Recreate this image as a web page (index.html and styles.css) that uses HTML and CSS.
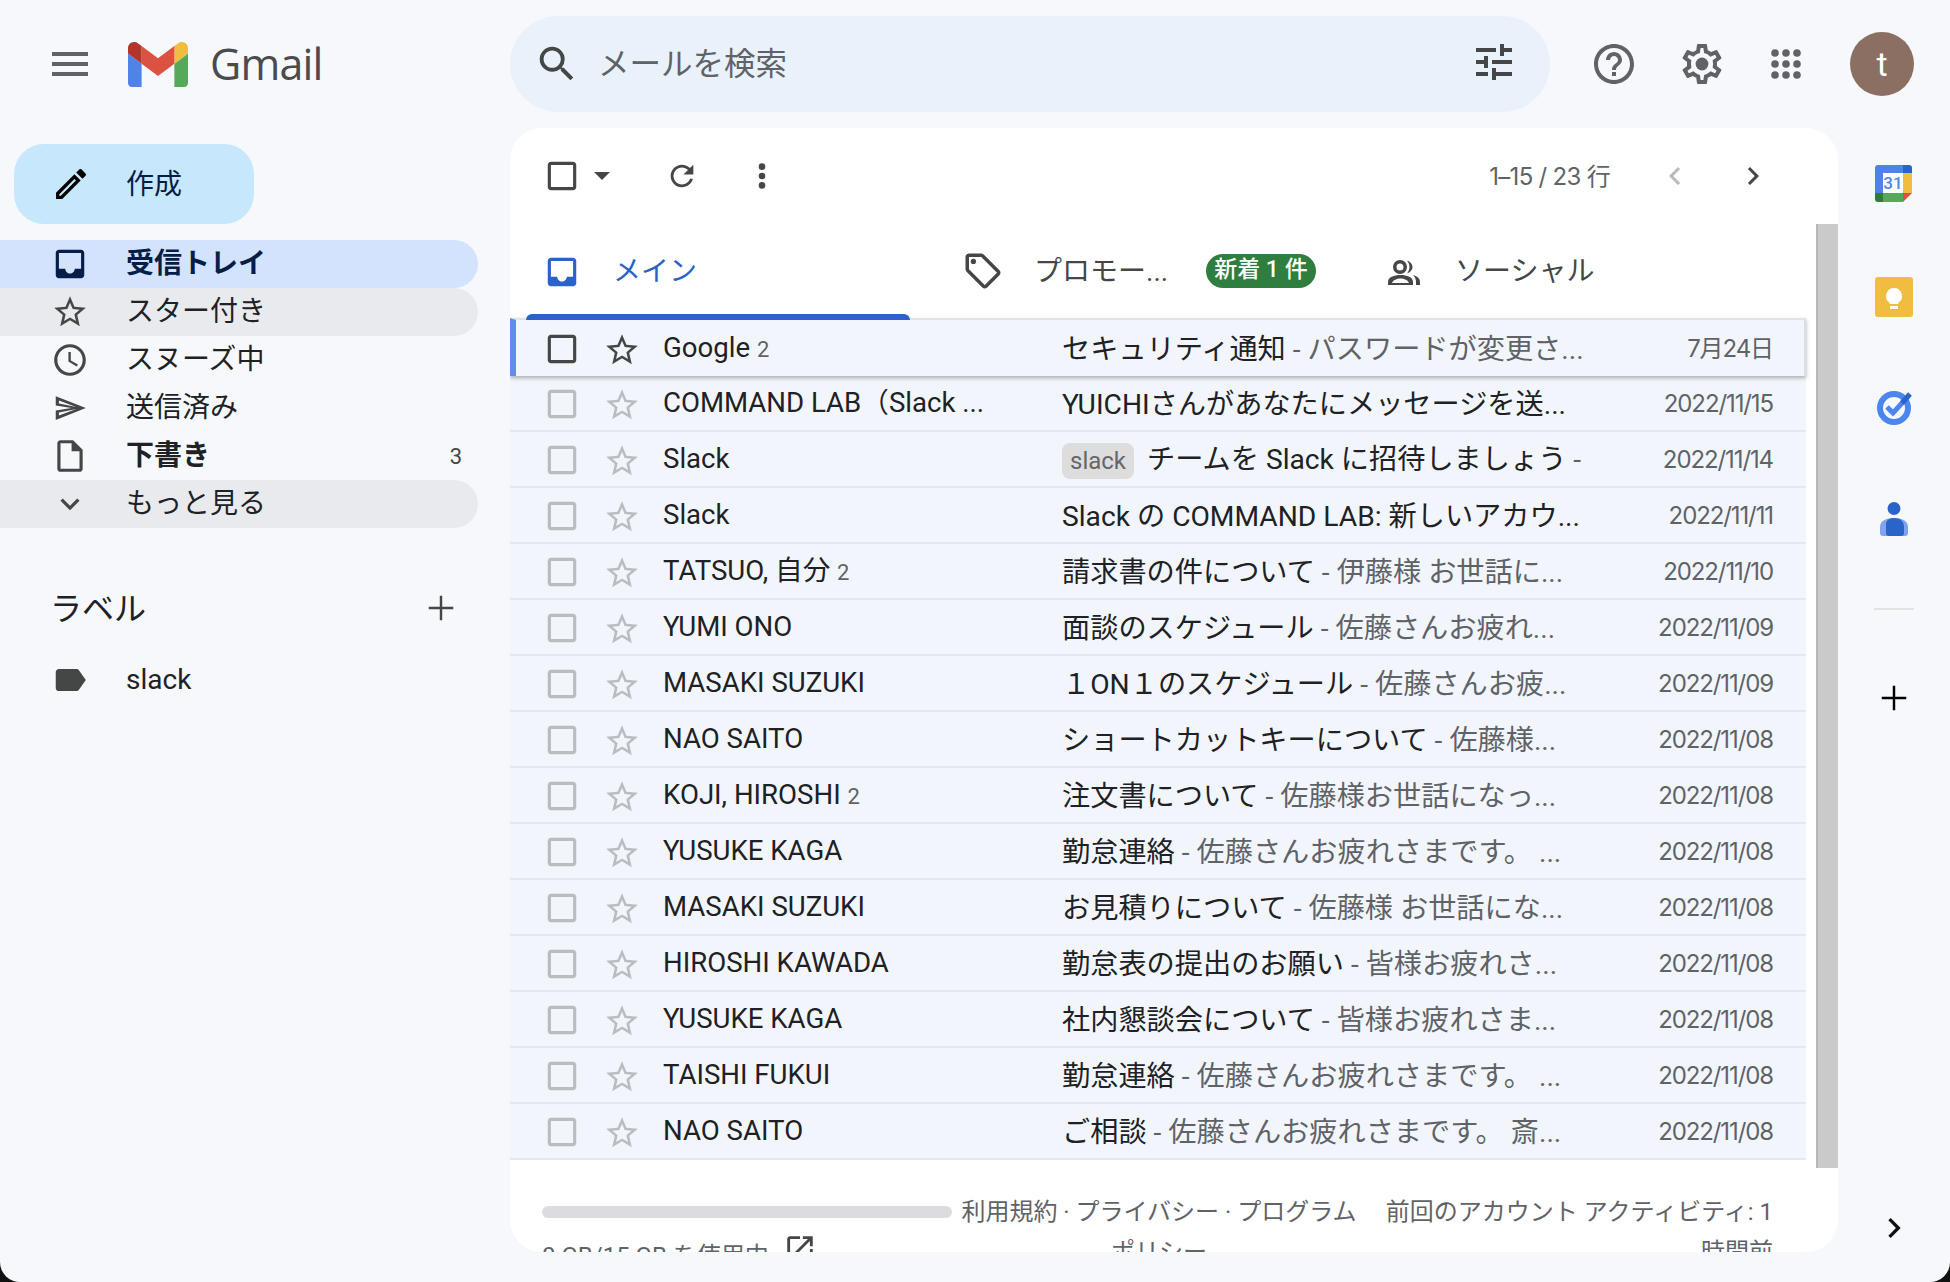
FILE: index.html
```html
<!DOCTYPE html>
<html lang="ja">
  <head>
    <meta charset="UTF-8" />
    <title>Gmail</title>
    <link rel="stylesheet" href="styles.css">
  </head>
  <body>
    <svg class="defs" aria-hidden="true">
      <symbol id="i-check" viewBox="0 0 24 24"><path d="M19 5v14H5V5h14m0-2H5c-1.1 0-2 .9-2 2v14c0 1.1.9 2 2 2h14c1.1 0 2-.9 2-2V5c0-1.1-.9-2-2-2z"/></symbol>
      <symbol id="i-star" viewBox="0 0 24 24"><path d="M22 9.24l-7.19-.62L12 2 9.19 8.63 2 9.24l5.46 4.73L5.82 21 12 17.27 18.18 21l-1.63-7.03L22 9.24zM12 15.4l-3.76 2.27 1-4.28-3.32-2.88 4.38-.38L12 6.1l1.71 4.04 4.38.38-3.32 2.88 1 4.28L12 15.4z"/></symbol>
      <symbol id="i-inbox" viewBox="0 0 24 24"><path d="M19 3H5c-1.1 0-2 .9-2 2v14c0 1.1.9 2 2 2h14c1.1 0 2-.9 2-2V5c0-1.1-.9-2-2-2zm0 12h-4c0 1.66-1.35 3-3 3s-3-1.34-3-3H5V5h14v10z"/></symbol>
      <symbol id="i-add" viewBox="0 0 24 24"><path d="M19 12.7h-6.300V19h-1.400v-6.300H5v-1.400h6.300V5h1.400v6.300H19z"/></symbol>
    </svg>

    <div class="screen">
      <header class="topbar">
        <div class="brand">
          <svg class="ico menu-ico" viewBox="0 0 24 24"><path d="M3 18h18v-2H3v2zm0-5h18v-2H3v2zm0-7v2h18V6H3z"/></svg>
          <svg class="gmail-logo" viewBox="52 42 88 66">
            <path fill="#5083ea" d="M58 108h14V74L52 59v43c0 3.32 2.69 6 6 6"/>
            <path fill="#57a85a" d="M120 108h14c3.32 0 6-2.69 6-6V59l-20 15"/>
            <path fill="#f1bd41" d="M120 48v26l20-15v-8c0-7.42-8.47-11.65-14.4-7.2"/>
            <path fill="#dc5240" d="M72 74V48l24 18 24-18v26L96 92"/>
            <path fill="#b2352b" d="M52 51v8l20 15V48l-5.6-4.2c-5.94-4.45-14.4-.22-14.4 7.2"/>
          </svg>
          <span class="brand-name">Gmail</span>
        </div>
        <div class="search">
          <svg class="ico search-ico" viewBox="0 0 24 24"><path d="M15.5 14h-.79l-.28-.27A6.471 6.471 0 0 0 16 9.5 6.5 6.5 0 1 0 9.5 16c1.61 0 3.09-.59 4.23-1.57l.27.28v.79l5 4.99L20.49 19l-4.99-5zm-6 0C7.01 14 5 11.99 5 9.5S7.01 5 9.5 5 14 7.01 14 9.5 11.99 14 9.5 14z"/></svg>
          <span class="search-text">メールを検索</span>
          <svg class="ico tune-ico" viewBox="0 0 24 24"><path d="M3 17v2h6v-2H3zM3 5v2h10V5H3zm10 16v-2h8v-2h-8v-2h-2v6h2zM7 9v2H3v2h4v2h2V9H7zm14 4v-2H11v2h10zm-6-4h2V7h4V5h-4V3h-2v6z"/></svg>
        </div>
        <div class="top-actions">
          <svg class="ico help-ico" viewBox="0 0 24 24"><path d="M11 18h2v-2h-2v2zm1-16C6.48 2 2 6.48 2 12s4.48 10 10 10 10-4.48 10-10S17.52 2 12 2zm0 18c-4.41 0-8-3.59-8-8s3.59-8 8-8 8 3.59 8 8-3.59 8-8 8zm0-14c-2.21 0-4 1.79-4 4h2c0-1.1.9-2 2-2s2 .9 2 2c0 2-3 1.75-3 5h2c0-2.25 3-2.5 3-5 0-2.21-1.79-4-4-4z"/></svg>
          <svg class="ico gear-ico" viewBox="0 0 24 24"><path d="M19.43 12.98c.04-.32.07-.64.07-.98 0-.34-.03-.66-.07-.98l2.11-1.65c.19-.15.24-.42.12-.64l-2-3.46c-.09-.16-.26-.25-.44-.25-.06 0-.12.01-.17.03l-2.49 1c-.52-.4-1.08-.73-1.69-.98l-.38-2.65C14.46 2.18 14.25 2 14 2h-4c-.25 0-.46.18-.49.42l-.38 2.65c-.61.25-1.17.59-1.69.98l-2.49-1c-.06-.02-.12-.03-.18-.03-.17 0-.34.09-.43.25l-2 3.46c-.13.22-.07.49.12.64l2.11 1.65c-.04.32-.07.65-.07.98 0 .33.03.66.07.98l-2.11 1.65c-.19.15-.24.42-.12.64l2 3.46c.09.16.26.25.44.25.06 0 .12-.01.17-.03l2.49-1c.52.4 1.08.73 1.69.98l.38 2.65c.03.24.24.42.49.42h4c.25 0 .46-.18.49-.42l.38-2.65c.61-.25 1.17-.59 1.69-.98l2.49 1c.06.02.12.03.18.03.17 0 .34-.09.43-.25l2-3.46c.12-.22.07-.49-.12-.64l-2.11-1.65zm-1.98-1.71c.04.31.05.52.05.73 0 .21-.02.43-.05.73l-.14 1.13.89.7 1.08.84-.7 1.21-1.27-.51-1.04-.42-.9.68c-.43.32-.84.56-1.25.73l-1.06.43-.16 1.13-.2 1.35h-1.4l-.19-1.35-.16-1.13-1.06-.43c-.43-.18-.83-.41-1.23-.71l-.91-.7-1.06.43-1.27.51-.7-1.21 1.08-.84.89-.7-.14-1.13c-.03-.31-.05-.54-.05-.74s.02-.43.05-.73l.14-1.13-.89-.7-1.08-.84.7-1.21 1.27.51 1.04.42.9-.68c.43-.32.84-.56 1.25-.73l1.06-.43.16-1.13.2-1.35h1.39l.19 1.35.16 1.13 1.06.43c.43.18.83.41 1.23.71l.91.7 1.06-.43 1.27-.51.7 1.21-1.07.85-.89.7.14 1.13z"/><circle cx="12" cy="12" r="3.2"/></svg>
          <svg class="ico apps-ico" viewBox="0 0 32 32"><circle cx="5" cy="5" r="3.8"/><circle cx="16" cy="5" r="3.8"/><circle cx="27" cy="5" r="3.8"/><circle cx="5" cy="16" r="3.8"/><circle cx="16" cy="16" r="3.8"/><circle cx="27" cy="16" r="3.8"/><circle cx="5" cy="27" r="3.8"/><circle cx="16" cy="27" r="3.8"/><circle cx="27" cy="27" r="3.8"/></svg>
          <div class="avatar">t</div>
        </div>
      </header>

      <div class="body-row">
        <aside class="sidebar">
          <div class="compose">
            <svg class="compose-ico" viewBox="0 0 24 24"><path d="M3 17.25V21h3.75L17.81 9.94l-3.75-3.75L3 17.25zM5.92 19H5v-.92l9.06-9.06.92.92L5.92 19zM20.71 5.63l-2.34-2.34c-.2-.2-.45-.29-.71-.29s-.51.1-.7.29l-1.83 1.83 3.75 3.75 1.83-1.83c.39-.39.39-1.02 0-1.41z"/></svg>
            <span class="compose-label">作成</span>
          </div>
          <nav class="nav">
            <div class="nav-item active">
              <svg class="nav-ico"><use href="#i-inbox"/></svg><span class="nav-label">受信トレイ</span>
            </div>
            <div class="nav-item hover">
              <svg class="nav-ico"><use href="#i-star"/></svg><span class="nav-label">スター付き</span>
            </div>
            <div class="nav-item">
              <svg class="nav-ico" viewBox="0 0 24 24"><path d="M11.99 2C6.47 2 2 6.48 2 12s4.47 10 9.99 10C17.52 22 22 17.52 22 12S17.52 2 11.99 2zM12 20c-4.42 0-8-3.58-8-8s3.58-8 8-8 8 3.58 8 8-3.58 8-8 8zm.5-13H11v6l5.25 3.15.75-1.23-4.5-2.67z"/></svg><span class="nav-label">スヌーズ中</span>
            </div>
            <div class="nav-item">
              <svg class="nav-ico" viewBox="0 0 24 24"><path fill-rule="evenodd" d="M3 4.500 22 12 3 19.500V13.600L13 12 3 10.400zM5 7.200v2l11 2.200zM5 16.800v-2l11-2.200z"/></svg><span class="nav-label">送信済み</span>
            </div>
            <div class="nav-item strong">
              <svg class="nav-ico" viewBox="0 0 24 24"><path d="M14 2H6c-1.1 0-1.99.9-1.99 2L4 20c0 1.1.89 2 1.99 2H18c1.1 0 2-.9 2-2V8l-6-6zM6 20V4h7v5h5v11H6z"/></svg><span class="nav-label">下書き</span><span class="nav-count">3</span>
            </div>
            <div class="nav-item hover">
              <svg class="nav-ico" viewBox="0 0 24 24"><path d="M16.59 8.59L12 13.17 7.41 8.59 6 10l6 6 6-6z"/></svg><span class="nav-label">もっと見る</span>
            </div>
          </nav>
          <div class="label-head">
            <span class="label-title">ラベル</span>
            <svg class="label-add"><use href="#i-add"/></svg>
          </div>
          <div class="nav-item label-item">
            <svg class="nav-ico" viewBox="0 0 24 24"><path d="M17.63 5.84C17.27 5.33 16.67 5 16 5L5 5.01C3.9 5.01 3 5.9 3 7v10c0 1.1.9 1.99 2 1.99L16 19c.67 0 1.27-.33 1.63-.84L22 12l-4.37-6.16z"/></svg><span class="nav-label">slack</span>
          </div>
        </aside>

        <main class="panel">
          <div class="panel-content">
            <div class="toolbar">
              <svg class="check-ico tool-check"><use href="#i-check"/></svg>
              <span class="caret"></span>
              <svg class="ico refresh-ico" viewBox="0 0 24 24"><path d="M17.65 6.35C16.2 4.9 14.21 4 12 4c-4.42 0-7.99 3.58-7.99 8s3.57 8 7.99 8c3.73 0 6.84-2.55 7.73-6h-2.08c-.82 2.33-3.04 4-5.65 4-3.31 0-6-2.69-6-6s2.69-6 6-6c1.66 0 3.14.69 4.22 1.78L13 11h7V4l-2.35 2.35z"/></svg>
              <svg class="ico dots-ico" viewBox="0 0 8 32"><circle cx="4" cy="6" r="3.500"/><circle cx="4" cy="16" r="3.500"/><circle cx="4" cy="26" r="3.500"/></svg>
              <span class="pager">1–15 / 23 行</span>
              <svg class="ico pager-prev" viewBox="0 0 24 24"><path d="M15.41 7.41L14 6l-6 6 6 6 1.41-1.41L10.83 12z"/></svg>
              <svg class="ico pager-next" viewBox="0 0 24 24"><path d="M10 6L8.59 7.41 13.17 12l-4.58 4.59L10 18l6-6z"/></svg>
            </div>

            <div class="tabs">
              <div class="tab tab-main">
                <svg class="tab-ico tab-inbox"><use href="#i-inbox"/></svg>
                <span class="tab-label">メイン</span>
              </div>
              <div class="tab tab-promo">
                <svg class="tab-ico" viewBox="0 0 24 24"><path d="M21.41 11.58l-9-9C12.05 2.22 11.55 2 11 2H4c-1.1 0-2 .9-2 2v7c0 .55.22 1.05.59 1.42l9 9c.36.36.86.58 1.41.58s1.05-.22 1.41-.59l7-7c.37-.36.59-.86.59-1.41s-.23-1.06-.59-1.42zM13 20.01L4 11V4h7v-.01l9 9-7 7.02z"/><circle cx="6.5" cy="6.5" r="1.5"/></svg>
                <span class="tab-label">プロモー...</span>
                <span class="tab-badge">新着 1 件</span>
              </div>
              <div class="tab tab-social">
                <svg class="social-ico" viewBox="0 0 34 26">
                  <path fill-rule="evenodd" d="M13 0a7 7 0 1 1 0 14 7 7 0 0 1 0-14zM13 3.500a3.500 3.500 0 1 0 0 7 3.500 3.500 0 0 0 0-7zM1 25v-3c0-5 6-7 12.500-7S26 17 26 22v3zM5 23h17c-1-3-5-4.500-8.500-4.500S6 20 5 23z"/>
                  <path d="M20 .5c3 1 5.500 3.500 5.500 6.500s-2.500 5.500-5.500 6.500c1.500-2 2.500-4 2.500-6.500s-1-4.500-2.500-6.500zM26 15c4 1 7 3.500 7 7v3h-4v-3c0-3-1-5-3-7z"/>
                </svg>
                <span class="tab-label">ソーシャル</span>
              </div>
            </div>

            <div class="mail-list">
              <div class="mail-row focused">
                <svg class="check-ico"><use href="#i-check"/></svg><svg class="star-ico"><use href="#i-star"/></svg>
                <span class="sender">Google <small>2</small></span>
                <span class="subject">セキュリティ通知 <em>- パスワードが変更さ...</em></span>
                <span class="date">7月24日</span>
              </div>
              <div class="mail-row">
                <svg class="check-ico"><use href="#i-check"/></svg><svg class="star-ico"><use href="#i-star"/></svg>
                <span class="sender">COMMAND LAB（Slack ...</span>
                <span class="subject">YUICHIさんがあなたにメッセージを送...</span>
                <span class="date">2022/11/15</span>
              </div>
              <div class="mail-row">
                <svg class="check-ico"><use href="#i-check"/></svg><svg class="star-ico"><use href="#i-star"/></svg>
                <span class="sender">Slack</span>
                <span class="subject"><b class="chip">slack</b> チームを Slack に招待しましょう <em>-</em></span>
                <span class="date">2022/11/14</span>
              </div>
              <div class="mail-row">
                <svg class="check-ico"><use href="#i-check"/></svg><svg class="star-ico"><use href="#i-star"/></svg>
                <span class="sender">Slack</span>
                <span class="subject">Slack の COMMAND LAB: 新しいアカウ...</span>
                <span class="date">2022/11/11</span>
              </div>
              <div class="mail-row">
                <svg class="check-ico"><use href="#i-check"/></svg><svg class="star-ico"><use href="#i-star"/></svg>
                <span class="sender">TATSUO, 自分 <small>2</small></span>
                <span class="subject">請求書の件について <em>- 伊藤様 お世話に...</em></span>
                <span class="date">2022/11/10</span>
              </div>
              <div class="mail-row">
                <svg class="check-ico"><use href="#i-check"/></svg><svg class="star-ico"><use href="#i-star"/></svg>
                <span class="sender">YUMI ONO</span>
                <span class="subject">面談のスケジュール <em>- 佐藤さんお疲れ...</em></span>
                <span class="date">2022/11/09</span>
              </div>
              <div class="mail-row">
                <svg class="check-ico"><use href="#i-check"/></svg><svg class="star-ico"><use href="#i-star"/></svg>
                <span class="sender">MASAKI SUZUKI</span>
                <span class="subject">１ON１のスケジュール <em>- 佐藤さんお疲...</em></span>
                <span class="date">2022/11/09</span>
              </div>
              <div class="mail-row">
                <svg class="check-ico"><use href="#i-check"/></svg><svg class="star-ico"><use href="#i-star"/></svg>
                <span class="sender">NAO SAITO</span>
                <span class="subject">ショートカットキーについて <em>- 佐藤様...</em></span>
                <span class="date">2022/11/08</span>
              </div>
              <div class="mail-row">
                <svg class="check-ico"><use href="#i-check"/></svg><svg class="star-ico"><use href="#i-star"/></svg>
                <span class="sender">KOJI, HIROSHI <small>2</small></span>
                <span class="subject">注文書について <em>- 佐藤様お世話になっ...</em></span>
                <span class="date">2022/11/08</span>
              </div>
              <div class="mail-row">
                <svg class="check-ico"><use href="#i-check"/></svg><svg class="star-ico"><use href="#i-star"/></svg>
                <span class="sender">YUSUKE KAGA</span>
                <span class="subject">勤怠連絡 <em>- 佐藤さんお疲れさまです。 ...</em></span>
                <span class="date">2022/11/08</span>
              </div>
              <div class="mail-row">
                <svg class="check-ico"><use href="#i-check"/></svg><svg class="star-ico"><use href="#i-star"/></svg>
                <span class="sender">MASAKI SUZUKI</span>
                <span class="subject">お見積りについて <em>- 佐藤様 お世話にな...</em></span>
                <span class="date">2022/11/08</span>
              </div>
              <div class="mail-row">
                <svg class="check-ico"><use href="#i-check"/></svg><svg class="star-ico"><use href="#i-star"/></svg>
                <span class="sender">HIROSHI KAWADA</span>
                <span class="subject">勤怠表の提出のお願い <em>- 皆様お疲れさ...</em></span>
                <span class="date">2022/11/08</span>
              </div>
              <div class="mail-row">
                <svg class="check-ico"><use href="#i-check"/></svg><svg class="star-ico"><use href="#i-star"/></svg>
                <span class="sender">YUSUKE KAGA</span>
                <span class="subject">社内懇談会について <em>- 皆様お疲れさま...</em></span>
                <span class="date">2022/11/08</span>
              </div>
              <div class="mail-row">
                <svg class="check-ico"><use href="#i-check"/></svg><svg class="star-ico"><use href="#i-star"/></svg>
                <span class="sender">TAISHI FUKUI</span>
                <span class="subject">勤怠連絡 <em>- 佐藤さんお疲れさまです。 ...</em></span>
                <span class="date">2022/11/08</span>
              </div>
              <div class="mail-row">
                <svg class="check-ico"><use href="#i-check"/></svg><svg class="star-ico"><use href="#i-star"/></svg>
                <span class="sender">NAO SAITO</span>
                <span class="subject">ご相談 <em>- 佐藤さんお疲れさまです。 斎...</em></span>
                <span class="date">2022/11/08</span>
              </div>
            </div>

            <footer class="mail-footer">
              <div class="storage">
                <div class="storage-bar"></div>
                <div class="storage-text">0 GB/15 GB を使用中
                  <svg class="storage-link" viewBox="0 0 24 24"><path d="M19 19H5V5h7V3H5c-1.11 0-2 .9-2 2v14c0 1.1.89 2 2 2h14c1.1 0 2-.9 2-2v-7h-2v7zM14 3v2h3.59l-9.83 9.83 1.41 1.41L19 6.41V10h2V3h-7z"/></svg>
                </div>
              </div>
              <div class="terms">利用規約 · プライバシー · プログラム<br>ポリシー</div>
              <div class="activity">前回のアカウント アクティビティ: 1<br>時間前</div>
            </footer>
          </div>
          <div class="scrollbar"></div>
        </main>

        <aside class="rail">
          <svg class="rail-cal" viewBox="0 0 37 37">
            <path fill="#fff" d="M8 8h20v20H8z"/>
            <path fill="#5083ea" d="M3 0h25v8H8v20H0V3a3 3 0 0 1 3-3z"/>
            <path fill="#2a64c8" d="M28 0h6a3 3 0 0 1 3 3v5h-9z"/>
            <path fill="#f1bd41" d="M28 8h9v20h-9z"/>
            <path fill="#57a85a" d="M8 28h20v9H8z"/>
            <path fill="#2f7d3c" d="M0 28h8v9H3a3 3 0 0 1-3-3z"/>
            <path fill="#dc5240" d="M28 28h9l-9 9z"/>
            <text x="18" y="24" text-anchor="middle" class="cal-num">31</text>
          </svg>
          <svg class="rail-keep" viewBox="0 0 38 40">
            <rect width="38" height="40" rx="3" fill="#f1bd41"/>
            <path fill="#fff" d="M19 11a8 8 0 0 0-4.500 14.600V27h9v-1.400A8 8 0 0 0 19 11zM15 29h8v3h-8z"/>
          </svg>
          <svg class="rail-tasks" viewBox="0 0 36 36">
            <circle cx="18" cy="18" r="14" fill="none" stroke="#4a86ee" stroke-width="6"/>
            <path fill="none" stroke="#4a86ee" stroke-width="5" d="M11 17l6 6 10-11"/>
            <path fill="none" stroke="#2a64c8" stroke-width="5" d="M26 13l8-9"/>
          </svg>
          <svg class="rail-contacts" viewBox="0 0 28 34">
            <circle cx="14" cy="6.500" r="6.500" fill="#2a64c8"/>
            <path fill="#7fa4f0" d="M14 16c8 0 14 3 14 9v6a3 3 0 0 1-3 3H3a3 3 0 0 1-3-3v-6c0-6 6-9 14-9z"/>
            <path fill="#2a64c8" d="M14 16c6 0 10 3 10 9v6a3 3 0 0 1-3 3H9a3 3 0 0 1-3-3v-9c0-4 4-6 8-6z"/>
          </svg>
          <div class="rail-line"></div>
          <svg class="rail-add"><use href="#i-add"/></svg>
          <svg class="ico rail-more" viewBox="0 0 24 24"><path d="M10 6L8.590 7.410 13.170 12l-4.580 4.590L10 18l6-6z"/></svg>
        </aside>
      </div>
    </div>
  </body>
</html>
```

FILE: styles.css
```css
* {
  box-sizing: border-box;
}
html,
body {
  margin: 0;
  height: 100%;
  background: #111;
}
body {
  font-family: Roboto, "Noto Sans CJK JP", sans-serif;
  color: #202124;
  overflow: hidden;
}
.defs {
  display: none;
}
.screen {
  width: 1950px;
  height: 1282px;
  background: #f6f8fc;
  border-radius: 0 0 20px 20px;
  overflow: hidden;
  display: flex;
  flex-direction: column;
}
.ico {
  fill: #5f6368;
  flex: none;
}

/* top bar */
.topbar {
  height: 128px;
  display: flex;
  flex: none;
}
.brand {
  width: 510px;
  display: flex;
  align-items: center;
  padding-left: 46px;
}
.menu-ico {
  width: 48px;
  height: 48px;
  margin-right: 34px;
}
.gmail-logo {
  width: 60px;
  height: 45px;
  margin-right: 22px;
}
.brand-name {
  font-family: "Open Sans", sans-serif;
  font-size: 43px;
  letter-spacing: -0.8px;
  color: #4a4b4d;
  margin-top: -2px;
}
.search {
  width: 1040px;
  height: 96px;
  margin-top: 16px;
  background: #e9f1fb;
  border-radius: 48px;
  display: flex;
  align-items: center;
  padding: 0 32px 0 24px;
}
.search-ico {
  width: 46px;
  height: 46px;
  fill: #444746;
}
.search-text {
  margin-left: 18px;
  margin-bottom: 6px;
  font-size: 31.500px;
  color: #5f6368;
  flex: 1;
}
.tune-ico {
  width: 48px;
  height: 48px;
  fill: #444746;
  margin-top: -4px;
}
.top-actions {
  display: flex;
  align-items: center;
  height: 128px;
  padding-left: 40px;
}
.help-ico {
  width: 48px;
  height: 48px;
}
.gear-ico {
  width: 48px;
  height: 48px;
  margin-left: 40px;
}
.apps-ico {
  width: 32px;
  height: 32px;
  margin-left: 44px;
}
.avatar {
  width: 64px;
  height: 64px;
  margin-left: 48px;
  border-radius: 50%;
  background: #8b6f63;
  color: #fff;
  font-size: 34px;
  display: flex;
  align-items: center;
  justify-content: center;
}

.body-row {
  flex: 1;
  display: flex;
  min-height: 0;
  padding-bottom: 30px;
}

/* sidebar */
.sidebar {
  width: 510px;
  flex: none;
  padding-top: 16px;
}
.compose {
  width: 240px;
  height: 80px;
  margin-left: 14px;
  margin-bottom: 16px;
  background: #c7e7fd;
  border-radius: 30px;
  display: flex;
  align-items: center;
  padding-left: 37px;
  font-size: 28px;
  color: #041e49;
}
.compose-ico {
  width: 40px;
  height: 40px;
  margin-right: 35px;
  flex: none;
}
.compose-label {
  margin-bottom: 4px;
}
.nav {
  width: 478px;
}
.nav-item {
  height: 48px;
  display: flex;
  align-items: center;
  padding-left: 51px;
  padding-right: 16px;
  border-radius: 0 24px 24px 0;
  font-size: 28px;
  color: #202124;
}
.nav-ico {
  width: 38px;
  height: 38px;
  margin-right: 37px;
  fill: #444746;
  flex: none;
}
.nav-label {
  flex: 1;
  margin-bottom: 6px;
}
.nav-item.active {
  background: #d3e3fd;
  color: #041e49;
  font-weight: 700;
}
.nav-item.active .nav-ico {
  fill: #041e49;
}
.nav-item.hover {
  background: #e9eaee;
}
.nav-item.strong {
  font-weight: 700;
}
.nav-count {
  font-size: 22px;
  font-weight: 400;
  color: #444746;
}
.label-head {
  width: 478px;
  height: 48px;
  margin-top: 56px;
  display: flex;
  align-items: center;
  justify-content: space-between;
  padding-left: 50px;
  padding-right: 16px;
  font-size: 32px;
}
.label-title {
  margin-bottom: 5px;
}
.label-add {
  width: 42px;
  height: 42px;
  fill: #444746;
}
.label-item {
  margin-top: 24px;
  width: 478px;
  color: #202124;
}
.label-item .nav-label {
  margin-bottom: 2px;
}

/* main panel */
.panel {
  width: 1328px;
  flex: none;
  background: #fff;
  border-radius: 32px;
  overflow: hidden;
  display: flex;
}
.panel-content {
  width: 1296px;
  flex: none;
}
.scrollbar {
  width: 22px;
  height: 944px;
  margin: 96px 0 0 10px;
  background: #cacaca;
  border-left: 2px solid #b8b8b8;
  flex: none;
}
.toolbar {
  height: 96px;
  display: flex;
  align-items: center;
  padding-left: 33px;
}
.check-ico {
  width: 38px;
  height: 38px;
  fill: #444746;
  flex: none;
}
.caret {
  width: 0;
  height: 0;
  margin-left: 13px;
  border-style: solid;
  border-width: 8px 8px 0;
  border-color: #444746 transparent transparent;
}
.refresh-ico {
  width: 34px;
  height: 34px;
  margin-left: 55px;
  fill: #444746;
}
.dots-ico {
  width: 8px;
  height: 30px;
  margin-left: 59px;
  fill: #444746;
}
.pager {
  margin-left: auto;
  margin-bottom: 4px;
  font-family: Inter, "Noto Sans CJK JP", sans-serif;
  font-size: 24px;
  letter-spacing: -0.700px;
  color: #5f6368;
}
.pager-prev {
  width: 36px;
  height: 36px;
  margin-left: 47px;
  fill: #b8babd;
}
.pager-next {
  width: 36px;
  height: 36px;
  margin-left: 42px;
  margin-right: 35px;
  fill: #444746;
}
.tabs {
  height: 96px;
  display: flex;
  padding-left: 16px;
}
.tab {
  display: flex;
  align-items: center;
  font-size: 28px;
  color: #444746;
  height: 94px;
}
.tab-label {
  margin-bottom: 4px;
}
.tab-ico {
  width: 42px;
  height: 42px;
  fill: #444746;
  flex: none;
}
.social-ico {
  width: 34px;
  height: 26px;
  margin-top: 4px;
  margin-left: 4px;
  fill: #444746;
  flex: none;
}
.tab-main {
  width: 384px;
  height: 96px;
  margin-right: 52px;
  padding-left: 17px;
  color: #2a62c9;
  position: relative;
  z-index: 1;
}
.tab-main::after {
  content: "";
  position: absolute;
  left: 0;
  right: 0;
  bottom: 0;
  height: 6px;
  background: #2a62c9;
  border-radius: 6px 6px 0 0;
}
.tab-inbox {
  width: 38px;
  height: 38px;
  fill: #2a62c9;
}
.tab-main .tab-label {
  margin-left: 32px;
  margin-bottom: 6px;
}
.tab-promo .tab-label {
  margin-left: 30px;
}
.tab-promo {
  width: 421px;
}
.tab-social .tab-label {
  margin-left: 34px;
}
.tab-badge {
  margin-left: 38px;
  height: 34px;
  padding: 0 8px;
  border-radius: 17px;
  background: #2f7d3f;
  color: #fff;
  font-size: 23px;
  font-weight: 500;
  line-height: 32px;
}

/* mail rows */
.mail-list {
  background: #f2f6fc;
}
.mail-row {
  height: 56px;
  display: flex;
  align-items: center;
  padding-left: 33px;
  padding-right: 33px;
  border-bottom: 2px solid #e4e8ee;
  font-size: 28.200px;
  white-space: nowrap;
}
.mail-row .check-ico {
  fill: #b9bcc0;
  margin-top: 2px;
}
.star-ico {
  width: 38px;
  height: 38px;
  margin-left: 22px;
  margin-top: 3px;
  fill: #b9bcc0;
  flex: none;
}
.sender {
  width: 399px;
  margin-left: 22px;
  flex: none;
  font-size: 27.600px;
  line-height: 1;
}
.sender small {
  font-size: 22px;
  color: #5f6368;
}
.subject {
  flex: 1;
  margin-top: -4px;
}
.subject em {
  font-style: normal;
  color: #5f6368;
}
.chip {
  display: inline-block;
  height: 36px;
  padding: 0 8px;
  margin-right: 6px;
  background: #dddddd;
  border-radius: 8px;
  color: #666;
  font-weight: 400;
  font-size: 24px;
  line-height: 36px;
}
.date {
  font-family: Inter, "Noto Sans CJK JP", sans-serif;
  font-size: 24px;
  letter-spacing: -1.100px;
  color: #5f6368;
}
.mail-row.focused {
  position: relative;
  margin-top: -2px;
  height: 58px;
  background: #f2f6fc;
  border-top: 2px solid #e1e3e6;
  border-right: 2px solid #dcdfe3;
  border-left: 6px solid #5f8ee9;
  border-bottom: 0;
  padding-left: 27px;
  padding-right: 31px;
  box-shadow: 0 2px 4px rgba(60, 64, 67, 0.4);
}
.mail-row.focused .check-ico,
.mail-row.focused .star-ico {
  fill: #444746;
}
.mail-row.focused .date {
  margin-bottom: 4px;
}

/* footer */
.mail-footer {
  display: flex;
  padding: 32px 33px 0 32px;
  font-size: 24px;
  line-height: 40px;
  color: #5f6368;
}
.storage {
  width: 418px;
  flex: none;
}
.storage-bar {
  width: 410px;
  height: 12px;
  margin: 14px 0;
  background: #dadce0;
  border-radius: 6px;
}
.storage-text {
  white-space: nowrap;
}
.storage-link {
  width: 34px;
  height: 34px;
  margin-left: 8px;
  fill: #444746;
  vertical-align: -2px;
}
.terms {
  width: 398px;
  flex: none;
  text-align: center;
}
.activity {
  flex: 1;
  text-align: right;
}

/* right rail */
.rail {
  flex: 1;
  display: flex;
  flex-direction: column;
  align-items: center;
}
.rail-cal {
  width: 37px;
  height: 37px;
  margin-top: 37px;
  margin-left: -1px;
}
.cal-num {
  font-family: Roboto, sans-serif;
  font-size: 17px;
  font-weight: 500;
  fill: #4a86ee;
}
.rail-keep {
  width: 38px;
  height: 40px;
  margin-top: 75px;
  margin-left: -1px;
}
.rail-tasks {
  width: 36px;
  height: 36px;
  margin-top: 73px;
}
.rail-contacts {
  width: 28px;
  height: 34px;
  margin-top: 76px;
  margin-left: -1px;
}
.rail-line {
  width: 40px;
  height: 2px;
  margin-top: 72px;
  background: #e2e4e4;
}
.rail-add {
  width: 42px;
  height: 42px;
  margin-top: 67px;
  fill: #000;
}
.rail-more {
  width: 40px;
  height: 40px;
  margin-top: auto;
  margin-bottom: 4px;
  fill: #111;
}
```
